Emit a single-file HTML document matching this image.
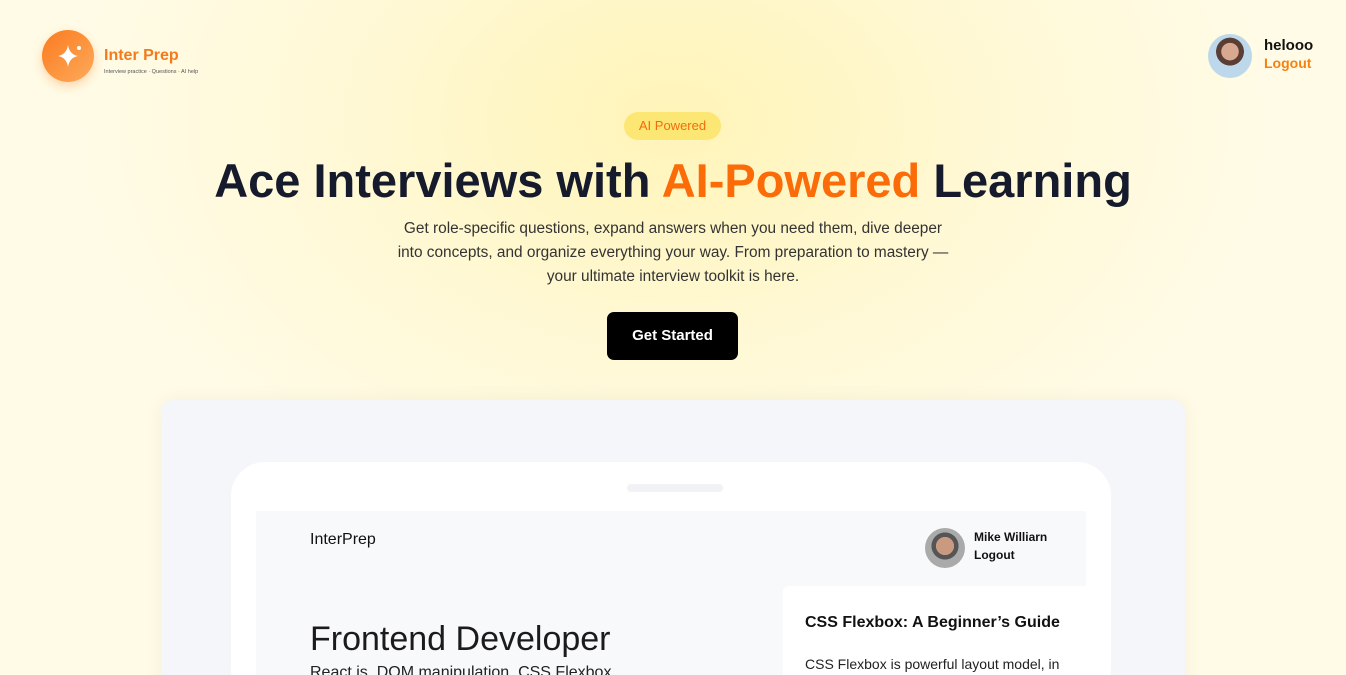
<!DOCTYPE html>
<html><head><meta charset="utf-8"><style>
*{margin:0;padding:0;box-sizing:border-box}
html,body{width:1346px;height:675px;overflow:hidden}
body{font-family:"Liberation Sans",sans-serif;background:radial-gradient(ellipse 600px 420px at 673px 120px,#fff4b8 0%,#fff9d8 60%,#fffbe6 100%);position:relative}
#w{position:absolute;left:0;top:0;width:1346px;height:675px;overflow:hidden}
.logo{position:absolute;left:42px;top:30px;width:52px;height:52px;border-radius:50%;background:linear-gradient(135deg,#fb7a1e,#fdab5c);box-shadow:0 4px 10px rgba(251,122,30,.3)}
.brand{position:absolute;left:104px;top:47px;font-weight:bold;font-size:16px;color:#f57a1c}
.tag{position:absolute;left:104px;top:69px;font-size:5.5px;color:#555}
.av{position:absolute;left:1208px;top:34px;width:44px;height:44px;border-radius:50%;background:radial-gradient(circle at 50% 40%,#d9a890 0 25%,#5a3e35 26% 40%,#bcd8ea 41%)}
.un{position:absolute;left:1264px;top:37px;font-weight:bold;font-size:15px;color:#111}
.lo{position:absolute;left:1264px;top:55px;font-weight:bold;font-size:14px;color:#f5820f}
.pill{position:absolute;left:624px;top:112px;width:97px;height:28px;border-radius:14px;background:#fde774;color:#f26c0c;font-size:13px;text-align:center;line-height:28px}
h1{position:absolute;left:0;width:1346px;top:153px;text-align:center;font-size:47px;font-weight:bold;color:#151a2c;letter-spacing:0}
h1 span{color:#fb6b08}
.p{position:absolute;left:343px;width:660px;top:217px;text-align:center;font-size:15.4px;line-height:24px;color:#333}
.btn{position:absolute;left:607px;top:312px;width:131px;height:48px;background:#000;color:#fff;border-radius:7px;font-weight:bold;font-size:15px;text-align:center;line-height:48px}
.card{position:absolute;left:161px;top:400px;width:1024px;height:300px;background:#f4f6f9;border-radius:12px;box-shadow:0 0 20px rgba(0,0,0,.05)}
.dev{position:absolute;left:231px;top:462px;width:880px;height:240px;background:#fff;border-radius:34px}
.notch{position:absolute;left:627px;top:484px;width:96px;height:8px;border-radius:4px;background:#f0f2f5}
.scr{position:absolute;left:256px;top:511px;width:830px;height:200px;background:#f8f9fa}
.ip{position:absolute;left:310px;top:531px;font-size:16px;color:#111}
.mav{position:absolute;left:925px;top:528px;width:40px;height:40px;border-radius:50%;background:radial-gradient(circle at 50% 45%,#c99a80 0 30%,#555 31% 45%,#aaa 46%)}
.mn{position:absolute;left:974px;top:530px;font-size:12px;font-weight:bold;color:#111}
.ml{position:absolute;left:974px;top:548px;font-size:12px;font-weight:bold;color:#111}
.fd{position:absolute;left:310px;top:620px;font-size:34px;color:#1b1b1b}
.fs{position:absolute;left:310px;top:664px;font-size:16px;color:#222}
.side{position:absolute;left:783px;top:586px;width:303px;height:120px;background:#fff;border-radius:6px 0 0 0}
.st{position:absolute;left:805px;top:614px;font-size:16px;font-weight:bold;color:#111}
.sp{position:absolute;left:805px;top:656px;font-size:14px;color:#222}
</style></head><body><div id="w">
<div class="logo"><svg width="52" height="52" viewBox="0 0 52 52"><path d="M26 15 Q27.5 24.5 36 26 Q27.5 27.5 26 37 Q24.5 27.5 16 26 Q24.5 24.5 26 15Z" fill="#fff"/><circle cx="37" cy="18" r="2" fill="#fff"/></svg></div>
<div class="brand">Inter Prep</div>
<div class="tag">Interview practice · Questions · AI help</div>
<div class="av"></div><div class="un">helooo</div><div class="lo">Logout</div>
<div class="pill">AI Powered</div>
<h1>Ace Interviews with <span>AI-Powered</span> Learning</h1>
<div class="p">Get role-specific questions, expand answers when you need them, dive deeper<br>into concepts, and organize everything your way. From preparation to mastery —<br>your ultimate interview toolkit is here.</div>
<div class="btn">Get Started</div>
<div class="card"></div><div class="dev"></div><div class="notch"></div><div class="scr"></div>
<div class="ip">InterPrep</div><div class="mav"></div><div class="mn">Mike Williarn</div><div class="ml">Logout</div>
<div class="fd">Frontend Developer</div><div class="fs">React.js, DOM manipulation, CSS Flexbox</div>
<div class="side"></div><div class="st">CSS Flexbox: A Beginner’s Guide</div><div class="sp">CSS Flexbox is powerful layout model, in</div>
</div></body></html>
